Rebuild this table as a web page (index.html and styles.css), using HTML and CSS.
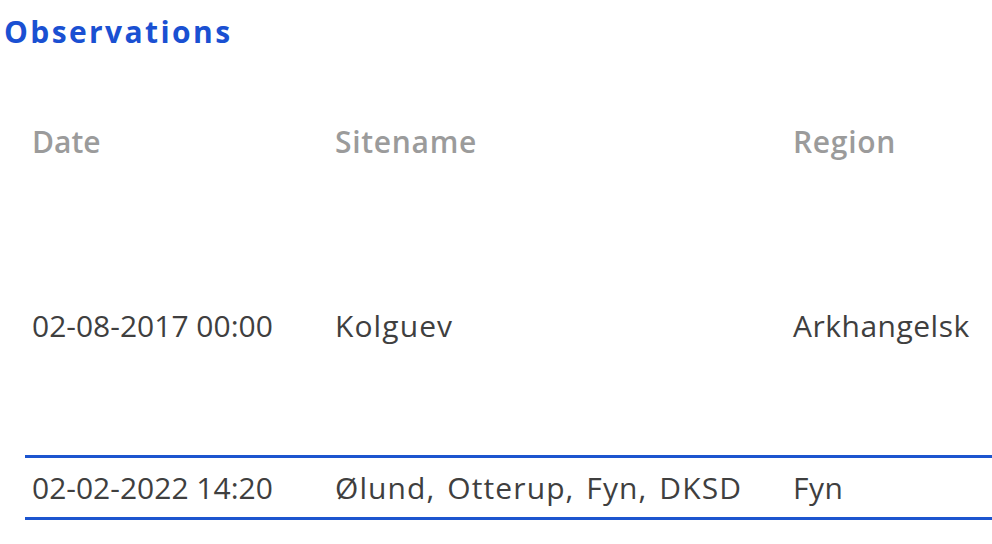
FILE: index.html
```html
<!DOCTYPE html>
<html lang="en">
<head>
<meta charset="utf-8">
<title>Observations</title>
<link rel="stylesheet" href="styles.css">
</head>
<body>
<h1 class="title">Observations</h1>
<div class="obs-table">
  <div class="row head">
    <div class="cell">Date</div>
    <div class="cell wide">Sitename</div>
    <div class="cell wide">Region</div>
  </div>
  <div class="row first">
    <div class="cell">02-08-2017 00:00</div>
    <div class="cell wide">Kolguev</div>
    <div class="cell wide region">Arkhangelsk</div>
  </div>
  <div class="row selected">
    <div class="cell">02-02-2022 14:20</div>
    <div class="cell wide">Ølund, Otterup, Fyn, DKSD</div>
    <div class="cell wide region">Fyn</div>
  </div>
</div>
</body>
</html>
```
FILE: styles.css
```css
html, body {
  margin: 0;
  padding: 0;
  background: #ffffff;
  overflow: hidden;
}
body {
  font-family: "Open Sans", "DejaVu Sans", sans-serif;
  width: 992px;
  height: 544px;
}
.title {
  margin: 0 0 36px 0;
  padding-left: 4px;
  font-size: 30px;
  font-weight: 700;
  line-height: 64px;
  letter-spacing: 2.4px;
  color: #1a50d2;
}
.obs-table {
  margin-left: 25px;
  width: 1000px;
}
.row {
  display: grid;
  grid-template-columns: 303px 458px 1fr;
  align-items: center;
  font-size: 30px;
  line-height: 42px;
}
.cell {
  padding-left: 7px;
  white-space: nowrap;
}
.cell.wide {
  letter-spacing: 1.1px;
  word-spacing: 3px;
}
.cell.region {
  letter-spacing: 0.5px;
}
.head {
  height: 84px;
  color: #9b9b9b;
  font-weight: 600;
}
.head .cell.wide {
  letter-spacing: 0.7px;
}
.first {
  height: 271px;
  box-sizing: border-box;
  padding-top: 13px;
  color: #3f3f3f;
}
.selected {
  height: 65px;
  box-sizing: border-box;
  border-top: 3px solid #1c55cf;
  border-bottom: 3px solid #1c55cf;
  color: #3f3f3f;
}
```
